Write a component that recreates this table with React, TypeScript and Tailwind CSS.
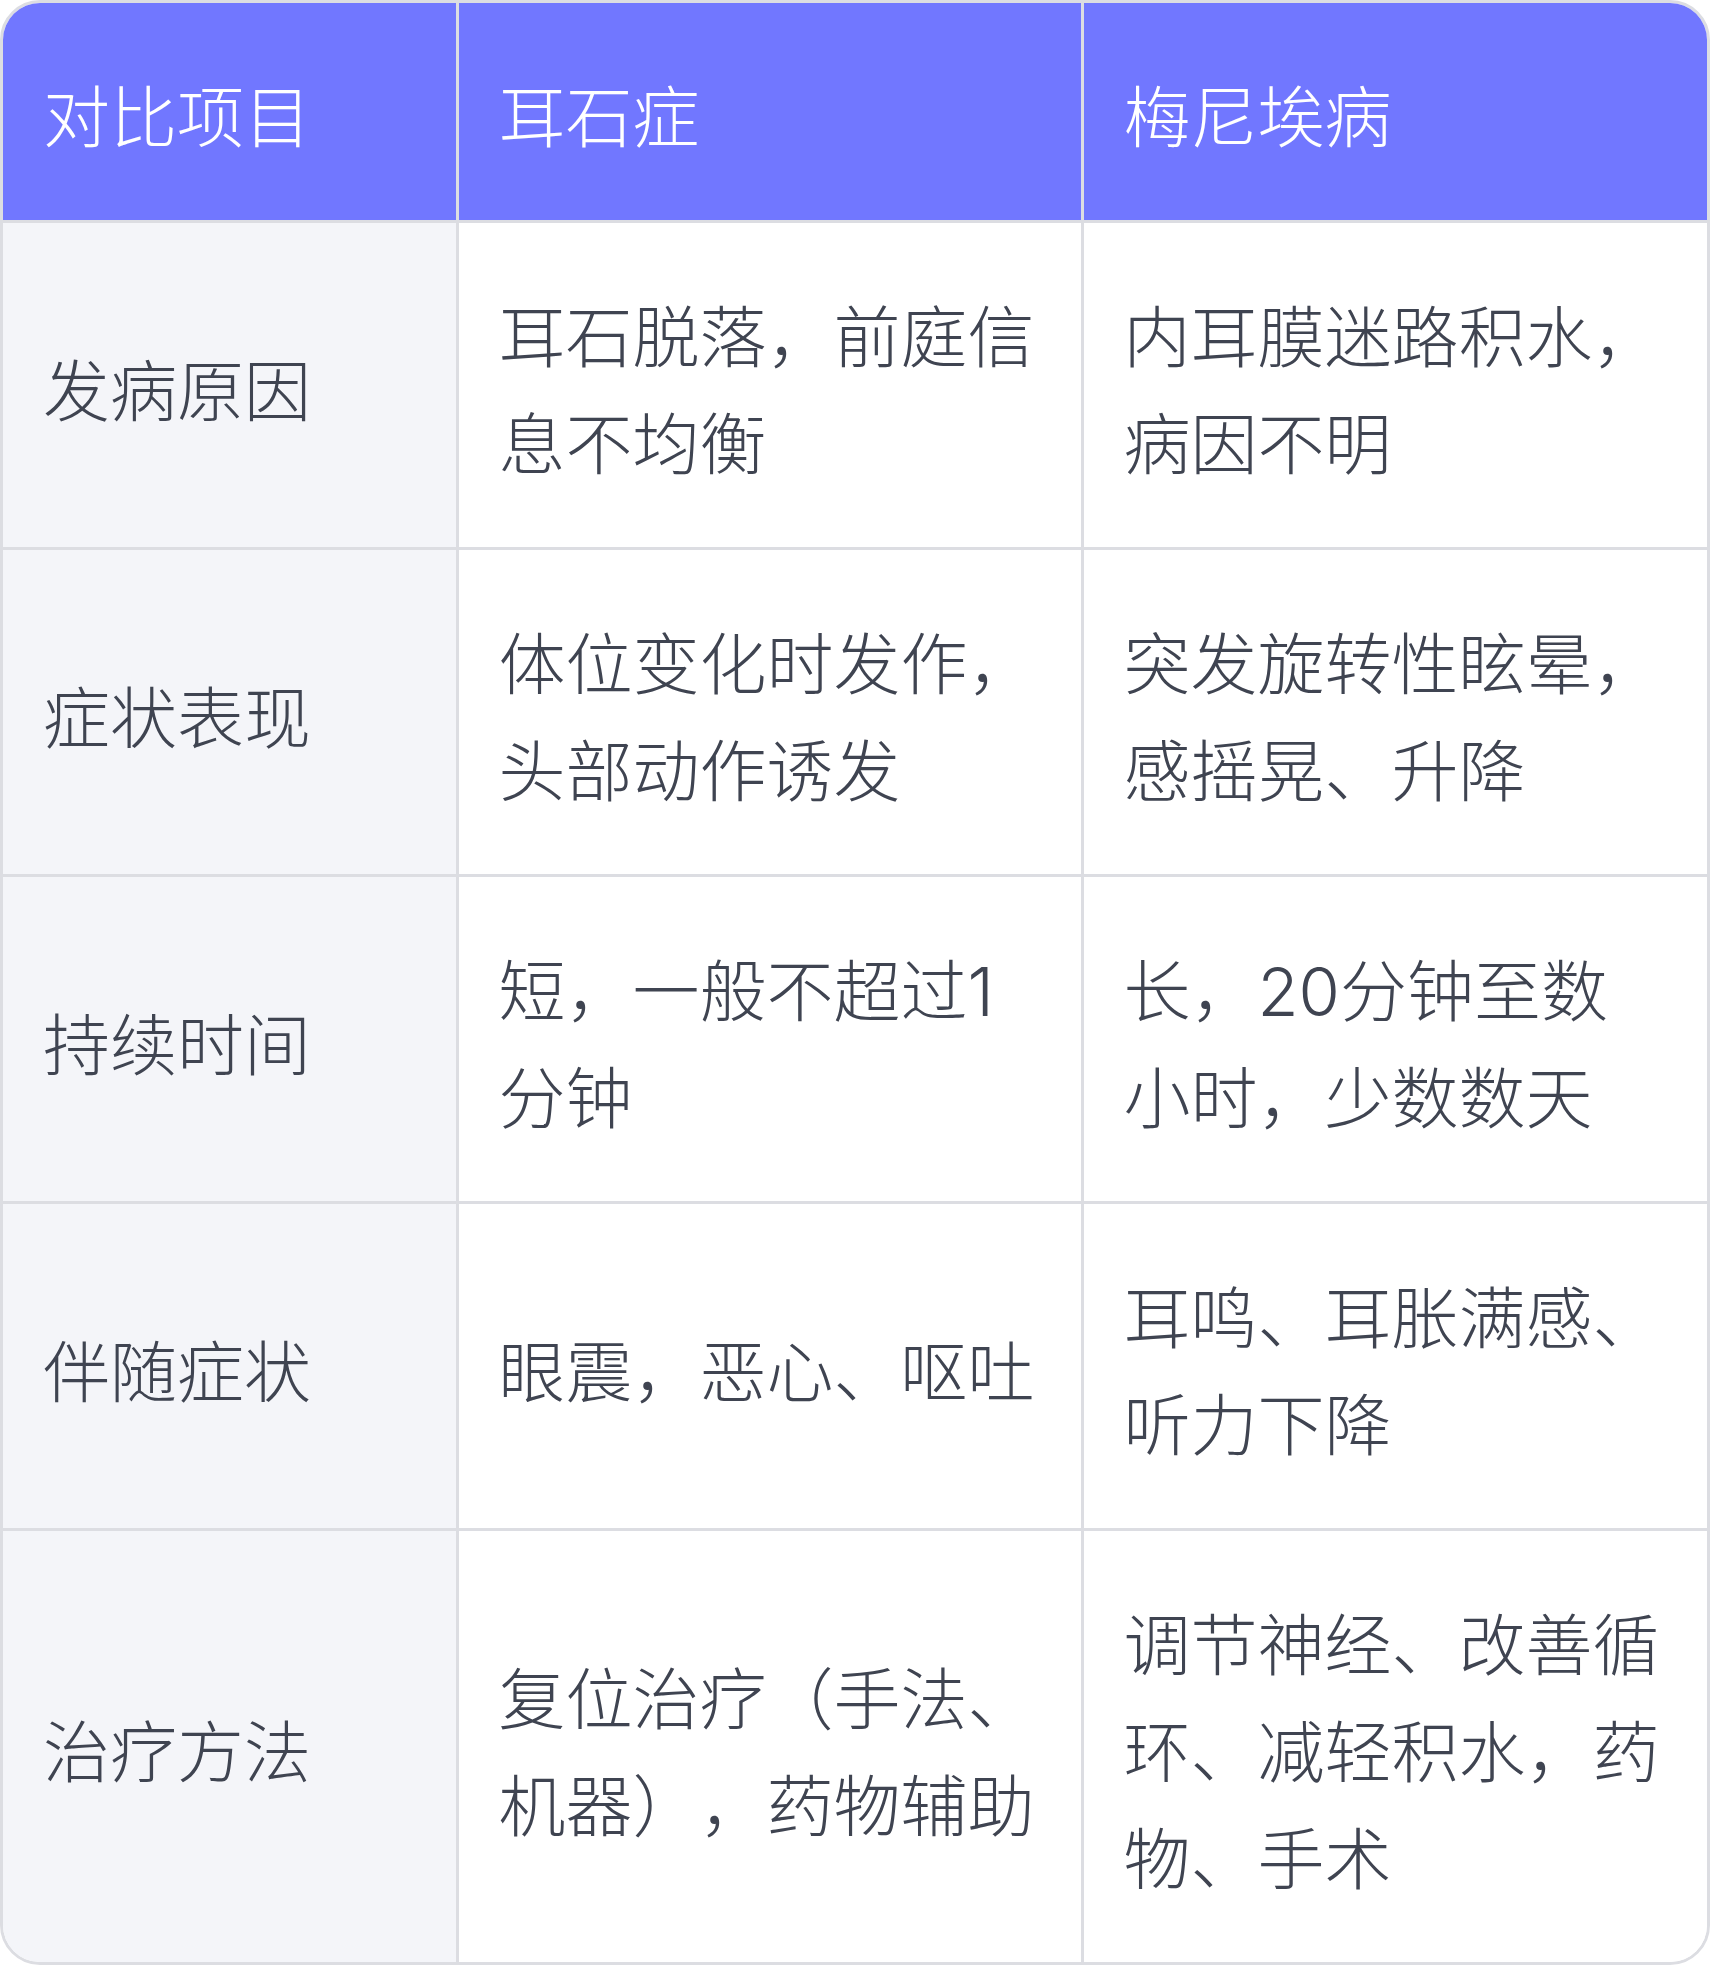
const rows: [string, string, string][] = [
  ['发病原因', '耳石脱落，前庭信息不均衡', '内耳膜迷路积水，病因不明'],
  ['症状表现', '体位变化时发作，头部动作诱发', '突发旋转性眩晕，感摇晃、升降'],
  ['持续时间', '短，一般不超过1分钟', '长，20分钟至数小时，少数数天'],
  ['伴随症状', '眼震，恶心、呕吐', '耳鸣、耳胀满感、听力下降'],
  ['治疗方法', '复位治疗（手法、机器），药物辅助', '调节神经、改善循环、减轻积水，药物、手术'],
]

const font = { fontFamily: 'Inter, "Noto Sans CJK SC", "Noto Sans", sans-serif' }

export default function App() {
  return (
    <div className="w-[1710px] bg-white" style={font}>
      <div className="overflow-hidden rounded-[40px] border-[3px] border-[#dcdde2]">
        <table className="w-full table-fixed border-collapse text-[67px] leading-[107px] font-light [text-spacing-trim:space-all]">
          <colgroup>
            <col className="w-[454px]" />
            <col />
            <col />
          </colgroup>
          <thead>
            <tr className="bg-[#7177ff] text-white">
              {['对比项目', '耳石症', '梅尼埃病'].map((h, i) => (
                <th
                  key={h}
                  className={`px-10 pt-[61px] pb-[49px] text-left align-middle font-light border-b-[3px] border-[#dcdde2] ${i < 2 ? 'border-r-[3px]' : ''}`}
                >
                  {h}
                </th>
              ))}
            </tr>
          </thead>
          <tbody className="text-[#3f4451]">
            {rows.map((r, ri) => (
              <tr key={r[0]}>
                {r.map((c, ci) => (
                  <td
                    key={ci}
                    className={`px-10 pt-[61px] pb-[49px] align-middle border-[#dcdde2] ${ci === 0 ? 'bg-[#f4f5f9]' : 'bg-white'} ${ci < 2 ? 'border-r-[3px]' : ''} ${ri < rows.length - 1 ? 'border-b-[3px]' : ''}`}
                  >
                    {c}
                  </td>
                ))}
              </tr>
            ))}
          </tbody>
        </table>
      </div>
    </div>
  )
}
